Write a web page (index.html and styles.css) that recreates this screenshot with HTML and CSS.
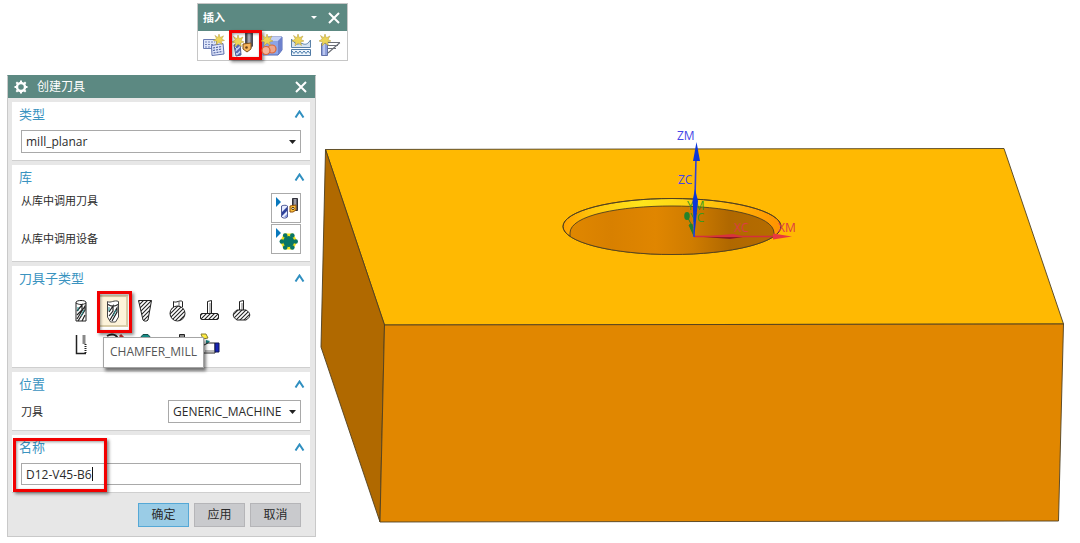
FILE: index.html
```html
<!DOCTYPE html>
<html lang="zh-CN">
<head>
<meta charset="utf-8">
<meta name="viewport" content="width=device-width, initial-scale=1">
<title>创建刀具</title>
<link rel="stylesheet" href="styles.css">
</head>
<body>
<svg class="defs" aria-hidden="true">
  <defs>
    <symbol id="star" viewBox="0 0 12 12">
      <path d="M6 0 7.300 3.800 11 2 9 5.500 12 7 8.500 8 9.500 11.500 6 9 3 12 3.500 8 0 7 3.300 5 1.500 1.500 4.800 3.800z" fill="#ecd458" stroke="#b59a3a" stroke-width=".5"/>
    </symbol>
    <symbol id="chevron" viewBox="0 0 11 8">
      <path d="M1.500 7.500 5.500 1.500 9.500 7.500" fill="none" stroke="#2f8fc0" stroke-width="2"/>
    </symbol>
    <pattern id="flute" width="4" height="4" patternUnits="userSpaceOnUse">
      <rect width="4" height="4" fill="#fff"/>
      <path d="M-1 5 5-1M-3 3 3-3M1 7 7 1" stroke="#222" stroke-width="1.100"/>
    </pattern>
    <pattern id="blueFlute" width="5" height="5" patternUnits="userSpaceOnUse">
      <rect width="5" height="5" fill="#c3d0f5"/>
      <path d="M-1 6 6-1" stroke="#5468b0" stroke-width="2"/>
    </pattern>
    <linearGradient id="steel"><stop offset="0" stop-color="#222"/><stop offset=".5" stop-color="#b8b8c4"/><stop offset="1" stop-color="#2b2b38"/></linearGradient>
  </defs>
</svg>

<main class="workspace">
  <section class="toolbar" aria-label="插入">
    <header class="toolbar-title">
      <h2>插入</h2>
      <button class="bare" type="button" aria-label="选项"><svg width="6" height="4" viewBox="0 0 6 4"><path d="M0 0h6L3 3z" fill="#fff"/></svg></button>
      <button class="bare" type="button" aria-label="关闭"><svg width="12" height="12" viewBox="0 0 12 12"><path d="M1 1 11 11M11 1 1 11" stroke="#fff" stroke-width="2"/></svg></button>
    </header>
    <div class="toolbar-icons">
      <button class="tool" type="button" aria-label="创建程序">
        <svg width="24" height="24" viewBox="0 0 24 24"><path d="M1.500 6.500h13v9h-13z" fill="#dfe6fa" stroke="#6b7cb4"/><path d="M3 9h10M3 11.500h8M3 14h6" stroke="#7484ba" stroke-dasharray="2 1"/><path d="M9.500 12.500 21 10.500 22 21 10 22.500z" fill="#dfe6fa" stroke="#5e70ae"/><path d="M11 15 20 13.500M11 17.500 20 16M11.500 20 20.500 18.500" stroke="#5264a5" stroke-width="1.200" stroke-dasharray="2 1"/><use href="#star" x="11" y="1" width="12" height="11"/></svg>
      </button>
      <button class="tool marked" type="button" aria-label="创建刀具">
        <svg width="24" height="24" viewBox="0 0 24 24"><path d="M3 12 9 10 10 22 5 23z" fill="url(#blueFlute)" stroke="#4a5c90"/><path d="M14.500 0h7v13l-4 4-3-4z" fill="url(#steel)" stroke="#4a4d58"/><path d="m12 11 8-1v6l-4 3-4-3z" fill="#f6b55c" stroke="#80511a"/><circle cx="15.500" cy="14.500" r="1.300" fill="#6a4218"/><use href="#star" x="1" y="2" width="12" height="12"/></svg>
        <span class="mark" aria-hidden="true"></span>
      </button>
      <button class="tool" type="button" aria-label="创建几何体">
        <svg width="24" height="24" viewBox="0 0 24 24"><path d="m3 8 5-4h14v13l-4 5H3z" fill="#8ba5e8" stroke="#5368b3"/><path d="m3 8 5-4h14l-4 4z" fill="#c2d0f6"/><path d="m18 8 4-4v13l-4 5z" fill="#6d81cc"/><circle cx="12" cy="16" r="4" fill="#eda58a" stroke="#dc6737" stroke-width="1.200"/><circle cx="6" cy="17.500" r="4" fill="#f5b59a" stroke="#d96435" stroke-width="1.200"/><use href="#star" x="1" y="1" width="12" height="12"/></svg>
      </button>
      <button class="tool" type="button" aria-label="创建方法">
        <svg width="24" height="24" viewBox="0 0 24 24"><path d="M2.500 6v8.500h19V7c-2 3-4 5-7 4-2-1-3-1-5 0s-5-2-7-5z" fill="#d6e4f2" stroke="#5c82a8"/><path d="M2.500 16.500v6h19v-6z" fill="#eef5fc" stroke="#517aa5"/><path d="m3 18 2 2.500L7 18l2 2.500 2-2.500 2 2.500 2-2.500 2 2.500 2-2.500 2 2.500" fill="none" stroke="#4a7cab"/><use href="#star" x="3" y="1" width="12" height="12"/></svg>
      </button>
      <button class="tool" type="button" aria-label="创建工序">
        <svg width="24" height="24" viewBox="0 0 24 24"><path d="M3.500 10.500h6v12h-6z" fill="#8fa0da" stroke="#6272a8"/><path d="M6 11v11" stroke="#c9d3f5" stroke-width="1.500"/><path d="M10 9.500h12M10 12.500h10M10 15.500h8M22 9.500 10 20" fill="none" stroke="#6b6e76" stroke-width="1.100"/><use href="#star" x="1" y="1" width="12" height="12"/></svg>
      </button>
    </div>
  </section>

  <form class="dialog" aria-label="创建刀具">
    <header class="dialog-title">
      <svg width="14" height="14" viewBox="0 0 14 14"><circle cx="7" cy="7" r="4" fill="none" stroke="#fff" stroke-width="2.400"/><path d="M7 .5v2M7 11.500v2M.5 7h2M11.500 7h2M2.300 2.300l1.500 1.500M10.200 10.200l1.500 1.500M11.700 2.300l-1.500 1.500M3.800 10.200l-1.500 1.500" stroke="#fff" stroke-width="2"/></svg>
      <h1>创建刀具</h1>
      <button class="bare" type="button" aria-label="关闭"><svg width="12" height="12" viewBox="0 0 12 12"><path d="M1 1 11 11M11 1 1 11" stroke="#fff" stroke-width="2"/></svg></button>
    </header>

    <div class="groups">
      <section class="group">
        <header class="group-head"><h2><label for="type">类型</label></h2><button class="bare" type="button" aria-label="折叠类型"><svg width="11" height="8"><use href="#chevron"/></svg></button></header>
        <div class="combo">
          <select id="type"><option>mill_planar</option></select>
          <svg class="arrow" width="7" height="4" viewBox="0 0 7 4"><path d="M0 0h7L3.500 4z" fill="#222"/></svg>
        </div>
      </section>

      <section class="group">
        <header class="group-head"><h2>库</h2><button class="bare" type="button" aria-label="折叠库"><svg width="11" height="8"><use href="#chevron"/></svg></button></header>
        <div class="rows">
          <div class="row row-top">
            <label for="lib-tool">从库中调用刀具</label>
            <button class="library" type="button" id="lib-tool">
              <svg width="28" height="28" viewBox="0 0 28 28"><path d="M4 3v10l5-5z" fill="#0878bd"/><path d="M9.500 12c2-1 5-1 6 0v11c-2 1.500-4 1.500-6 0z" fill="#e6ecff" stroke="#505b96"/><path d="m10 18 5-5v4l-5 5z" fill="#2c419c"/><path d="m12 23 3-3v3z" fill="#8296df"/><path d="M20.500 4.500h5v12h-5z" fill="url(#steel)" stroke="#30303a"/><path d="m18 12 6-1v5l-3 2h-3z" fill="#ffc33c" stroke="#91500c"/><circle cx="21" cy="14.500" r="1.200" fill="#fff" stroke="#513100"/></svg>
            </button>
          </div>
          <div class="row">
            <label for="lib-device">从库中调用设备</label>
            <button class="library" type="button" id="lib-device">
              <svg width="28" height="28" viewBox="0 0 28 28"><path d="M4 3v10l5-5z" fill="#0878bd"/><path d="m12 8.500 9 0 4.500 8L21 24.500h-9L8 16.500z" fill="#f3e31e"/><circle cx="16.700" cy="16.500" r="5.500" fill="#087567"/><g fill="#087567"><circle cx="9.800" cy="16.500" r="2.300"/><circle cx="23.700" cy="16.500" r="2.300"/><circle cx="13.200" cy="10.500" r="2.300"/><circle cx="20.300" cy="10.500" r="2.300"/><circle cx="13.200" cy="22.500" r="2.300"/><circle cx="20.300" cy="22.500" r="2.300"/></g></svg>
            </button>
          </div>
        </div>
      </section>

      <section class="group group-subtypes">
        <header class="group-head"><h2>刀具子类型</h2><button class="bare" type="button" aria-label="折叠刀具子类型"><svg width="11" height="8"><use href="#chevron"/></svg></button></header>
        <div class="subtypes">
          <button class="subtype" type="button" aria-label="MILL"><svg width="24" height="24" viewBox="0 0 24 24"><path d="M7 3c1-2 9-2 10 0v19H7z" fill="#fff" stroke="#222"/><path d="M7 4c3 2 7 2 10 0" fill="none" stroke="#222"/><path d="m8 12 5-6v5l-5 5M8 20l8-13v4l-7 11M13 22l3-6" fill="none" stroke="#222" stroke-width="1.200"/><path d="M9 8v4M15 11l-3 6" stroke="#258b8b"/></svg></button>
          <button class="subtype selected" type="button" aria-label="CHAMFER_MILL" aria-describedby="tip"><svg width="24" height="24" viewBox="0 0 24 24"><path d="M6.500 2.500c3 2 7-2 11 0V18l-3 5h-5l-3-5z" fill="#fff" stroke="#444"/><path d="M7 5.500c3 2 7 2 10 0M8 13l4-6v5l-4 5M9 21l7-12v4l-5 9" fill="none" stroke="#222" stroke-width="1.200"/><path d="m8 8v4M15 11l-3 6" stroke="#258b8b"/></svg><span class="mark mark-large" aria-hidden="true"></span><span class="tooltip" role="tooltip" id="tip">CHAMFER_MILL</span></button>
          <button class="subtype" type="button" aria-label="BALL_MILL"><svg width="24" height="24" viewBox="0 0 24 24"><path d="M5.500 1.500h13L15 21c-1 1.500-4 1.500-5 0z" fill="url(#flute)" stroke="#222"/></svg></button>
          <button class="subtype" type="button" aria-label="SPHERICAL_MILL"><svg width="24" height="24" viewBox="0 0 24 24"><path d="M8.500 8V2.500c3 2 6-2 9 0V8" fill="#fff" stroke="#222"/><path d="M14 2v7" stroke="#666"/><circle cx="12.500" cy="14.500" r="7.500" fill="url(#flute)" stroke="#222"/></svg></button>
          <button class="subtype" type="button" aria-label="T_CUTTER"><svg width="24" height="24" viewBox="0 0 24 24"><path d="M10.500 14V2.500l4-1V14" fill="#fff" stroke="#222"/><path d="M13 4v10" stroke="#777"/><rect x="3.500" y="14.500" width="18" height="6" rx="1.500" fill="url(#flute)" stroke="#222"/></svg></button>
          <button class="subtype" type="button" aria-label="BARREL"><svg width="24" height="24" viewBox="0 0 24 24"><path d="M10.500 12V2.500l4-1V12" fill="#fff" stroke="#222"/><path d="M13 4v8" stroke="#777"/><path d="M8 11h9c5 3 5 7 0 10H8c-5-3-5-7 0-10z" fill="url(#flute)" stroke="#222"/></svg></button>
          <button class="subtype" type="button" aria-label="THREAD_MILL"><svg width="24" height="24" viewBox="0 0 24 24"><path d="M7.500 2v18.500H17V2" fill="#fff"/><path d="M7.500 2v18.500H17" fill="none" stroke="#222" stroke-width="1.500"/><path d="M15 2v9" stroke="#888" stroke-width="3"/><path d="M16.500 11v9" stroke="#222" stroke-width="2" stroke-dasharray="1 1"/></svg></button>
          <button class="subtype" type="button" aria-label="MILL_USER_DEFINED"><svg width="24" height="24" viewBox="0 0 24 24"><path d="M6 3c5-3 9-1 10 1L8 9" fill="#fff" stroke="#222" stroke-width="2"/><path d="m19 2 3 3" stroke="#c42b29" stroke-width="3"/></svg></button>
          <button class="subtype" type="button" aria-label="CARRIER"><svg width="24" height="24" viewBox="0 0 24 24"><path d="m7 5 3-3.500h5L18 5v10H7z" fill="#168b86" stroke="#184d4b"/></svg></button>
          <button class="subtype" type="button" aria-label="MCT_POCKET"><svg width="24" height="24" viewBox="0 0 24 24"><path d="M14.500 1.500h5V14h-5z" fill="#888" stroke="#222"/></svg></button>
          <button class="subtype" type="button" aria-label="HEAD"><svg width="24" height="24" viewBox="0 0 24 24"><path d="m4 1 5 0 2 4-5 1z" fill="#ffed42" stroke="#887f32"/><path d="m9 7 4 1-4 5z" fill="#168080"/><path d="M5 20V13l6-3h7v10z" fill="#fff" stroke="#222"/><path d="M8 19h9v-2H8z" fill="#bbb"/><path d="M18 10h4v9h-4z" fill="#1724b6" stroke="#101650"/></svg></button>
        </div>
      </section>

      <section class="group">
        <header class="group-head"><h2>位置</h2><button class="bare" type="button" aria-label="折叠位置"><svg width="11" height="8"><use href="#chevron"/></svg></button></header>
        <div class="row">
          <label for="machine">刀具</label>
          <div class="combo combo-machine">
            <select id="machine"><option>GENERIC_MACHINE</option></select>
            <svg class="arrow" width="7" height="4" viewBox="0 0 7 4"><path d="M0 0h7L3.500 4z" fill="#222"/></svg>
          </div>
        </div>
      </section>

      <section class="group group-name">
        <header class="group-head"><h2><label for="name">名称</label></h2><button class="bare" type="button" aria-label="折叠名称"><svg width="11" height="8"><use href="#chevron"/></svg></button></header>
        <div class="field"><input id="name" type="text" value="D12-V45-B6"><span class="caret" aria-hidden="true"></span></div>
        <span class="mark mark-name" aria-hidden="true"></span>
      </section>
    </div>

    <footer class="actions">
      <button class="action primary" type="submit">确定</button>
      <button class="action" type="button">应用</button>
      <button class="action" type="button">取消</button>
    </footer>
  </form>

  <svg class="model" viewBox="316 75 764 468" preserveAspectRatio="xMinYMin meet" role="img" aria-label="带倒角孔的方块">
    <defs>
      <linearGradient id="rim"><stop offset="0" stop-color="#ffa000"/><stop offset=".12" stop-color="#ffc20a"/><stop offset=".36" stop-color="#ffe51c"/><stop offset=".62" stop-color="#ffcf10"/><stop offset=".85" stop-color="#ffa905"/><stop offset="1" stop-color="#ff9200"/></linearGradient>
      <linearGradient id="bore"><stop offset="0" stop-color="#e08700"/><stop offset=".2" stop-color="#d88000"/><stop offset=".42" stop-color="#e08600"/><stop offset=".6" stop-color="#cf7c00"/><stop offset=".78" stop-color="#b06800"/><stop offset="1" stop-color="#b56c00"/></linearGradient>
      <clipPath id="mouth"><ellipse cx="672" cy="226.500" rx="109" ry="28"/></clipPath>
    </defs>
    <g stroke="#4f4020" stroke-width=".9" stroke-linejoin="round">
      <path d="M325.500 149.500 1004 148.500 1063.500 324 384.500 325z" fill="#ffb902"/>
      <path d="M325.500 149.500 384.500 325 380 522 321 347z" fill="#b06900"/>
      <path d="M384.500 325 1063.500 324 1058.500 521 380 522z" fill="#e18700"/>
      <ellipse cx="672" cy="226.500" rx="109" ry="28" fill="url(#rim)"/>
      <path d="M570 233c0-36 204-36 204 0v26H570z" fill="url(#bore)" clip-path="url(#mouth)"/>
      <ellipse cx="672" cy="226.500" rx="109" ry="28" fill="none"/>
    </g>
    <g class="axis-label">
      <text class="axis-y" x="687" y="210">YM</text>
      <text class="axis-y" x="690" y="222">YC</text>
      <path d="M694 236 689 225l3-1z" fill="#23832b" stroke="#23832b"/>
      <path d="M687 216 693 228" stroke="#23832b"/>
      <ellipse cx="687" cy="216" rx="2.800" ry="4" fill="#23832b"/>
      <text class="axis-x" x="734" y="232">XC</text>
      <text class="axis-x" x="778" y="232">XM</text>
      <path d="M694 236.500h80" stroke="#d42f3c" stroke-width="1.500"/>
      <path d="m704 236.500 29-2.500 11 2.500-11 2z" fill="#d8333c"/>
      <path d="M704 237h39l-13 2z" fill="#8d1c20"/>
      <path d="m773 233.500 19 3-19 3z" fill="#e8393f"/>
      <text class="axis-z" x="677" y="140">ZM</text>
      <text class="axis-z" x="678" y="184">ZC</text>
      <path d="M694 237 696 158" stroke="#3040d8" stroke-width="1.600"/>
      <path d="m695 189 3 12-3.500 34-2-34z" fill="#0b36d8"/>
      <path d="m696.500 142 3.500 19h-7z" fill="#0b36d8"/>
    </g>
  </svg>
</main>
</body>
</html>
```
FILE: styles.css
```css
* {
  box-sizing: border-box;
}

body {
  margin: 0;
  background: #fff;
  color: #2b2b2b;
  font: 12px/16px "Open Sans", "Noto Sans CJK SC", sans-serif;
}

h1,
h2 {
  margin: 0;
  font-weight: 400;
}

button,
input,
select {
  margin: 0;
  font: inherit;
  color: inherit;
}

svg {
  display: block;
}

.defs {
  position: absolute;
  width: 0;
  height: 0;
}

.workspace {
  display: grid;
  grid-template-columns: 309px minmax(0, 1fr);
  row-gap: 14px;
  align-items: start;
  padding: 3px 0 0 7px;
}

.bare {
  display: grid;
  place-items: center;
  padding: 0;
  border: 0;
  background: none;
}

/* Floating insert toolbar */

.toolbar {
  grid-column: 1 / -1;
  justify-self: start;
  margin-left: 190px;
  border: 1px solid #c6c6c6;
  background: #fff;
}

.toolbar-title {
  display: flex;
  align-items: center;
  gap: 11px;
  height: 27px;
  padding: 0 7px 0 5px;
  background: #5c8982;
  color: #fff;
}

.toolbar-title h2 {
  flex: 1;
  font-size: 11px;
  font-weight: 700;
}

.toolbar-icons {
  display: flex;
  gap: 5px;
  padding: 2px 5px 3px 4px;
}

.tool {
  position: relative;
  padding: 0;
  border: 0;
  background: none;
}

/* Red callout frames */

.mark {
  position: absolute;
  inset: -3px -7px -3px -2px;
  border: 3px solid #f20000;
  box-shadow: 2px 2px 3px rgb(0 0 0 / 45%), inset 1px 1px 3px rgb(0 0 0 / 40%);
  pointer-events: none;
}

.mark-large {
  inset: -6px -6px -8px -3px;
}

.mark-name {
  inset: 3px auto 0 1px;
  width: 94px;
}

/* Dialog */

.dialog {
  border: 1px solid #c9c9c9;
  border-top-color: #5c8982;
  background: #e7e7e7;
}

.dialog-title {
  display: flex;
  align-items: center;
  gap: 9px;
  height: 22px;
  padding: 0 8px 0 6px;
  background: #5c8982;
  color: #fff;
}

.dialog-title h1 {
  flex: 1;
  font-size: 12px;
}

.groups {
  display: grid;
  gap: 4px;
  padding: 4px 5px 0 4px;
}

.group {
  position: relative;
  padding: 0 9px 7px;
  border-bottom: 1px solid #cfcfcf;
  background: #fff;
}

.group-subtypes {
  padding-bottom: 5px;
}

.group-head {
  display: flex;
  align-items: center;
  justify-content: space-between;
  height: 24px;
  margin: 0 -4px 4px -2px;
  color: #3a93bf;
}

.group-head h2 {
  font-size: 13px;
}

.rows {
  display: grid;
  gap: 1px;
}

.row {
  display: flex;
  align-items: center;
  justify-content: space-between;
  font-size: 11px;
}

.row-top {
  align-items: flex-start;
}

.combo {
  display: grid;
  align-items: center;
  font-size: 12px;
}

.combo-machine {
  width: 133px;
}

.combo > * {
  grid-area: 1 / 1;
}

.combo select {
  appearance: none;
  width: 100%;
  height: 23px;
  padding: 0 4px;
  border: 1px solid #a9a9a9;
  border-radius: 0;
  background: #fff;
}

.arrow {
  justify-self: end;
  margin-right: 5px;
  pointer-events: none;
}

.library {
  padding: 0;
  border: 1px solid #aaa;
  background: #fff;
}

.subtypes {
  display: grid;
  grid-template-columns: repeat(6, 32px);
  grid-auto-rows: 34px;
  justify-content: center;
}

.subtype {
  position: relative;
  display: grid;
  place-items: center;
  margin: 1px;
  padding: 0;
  border: 0;
  background: none;
}

.subtype.selected {
  z-index: 1;
  border: 2px solid #d9cda8;
  background: #fdf3d9;
}

.tooltip {
  position: absolute;
  top: 40px;
  left: 3px;
  padding: 6px 6px 7px;
  border: 1px solid #a5a5a5;
  background: #fff;
  box-shadow: 2px 3px 3px rgb(0 0 0 / 50%);
  color: #555;
  white-space: nowrap;
}

.field {
  position: relative;
}

.field input {
  display: block;
  width: 100%;
  height: 22px;
  padding: 0 4px;
  border: 1px solid #a9a9a9;
  background: #fff;
}

.caret {
  position: absolute;
  top: 4px;
  left: 71px;
  width: 1px;
  height: 14px;
  background: #111;
}

.actions {
  display: flex;
  justify-content: flex-end;
  gap: 5px;
  padding: 10px 14px 9px;
}

.action {
  width: 51px;
  height: 24px;
  padding: 0;
  border: 1px solid #b5b5b8;
  background: #c9cacd;
}

.action.primary {
  border-color: #55a8d6;
  background: #9acce6;
}

/* Graphics window */

.model {
  width: 100%;
  height: auto;
}

.axis-label {
  font-family: "Open Sans", sans-serif;
  font-size: 12px;
}

.axis-x {
  fill: #dc3c46;
}

.axis-y {
  fill: #3c9a1e;
}

.axis-z {
  fill: #4646e6;
}
```
